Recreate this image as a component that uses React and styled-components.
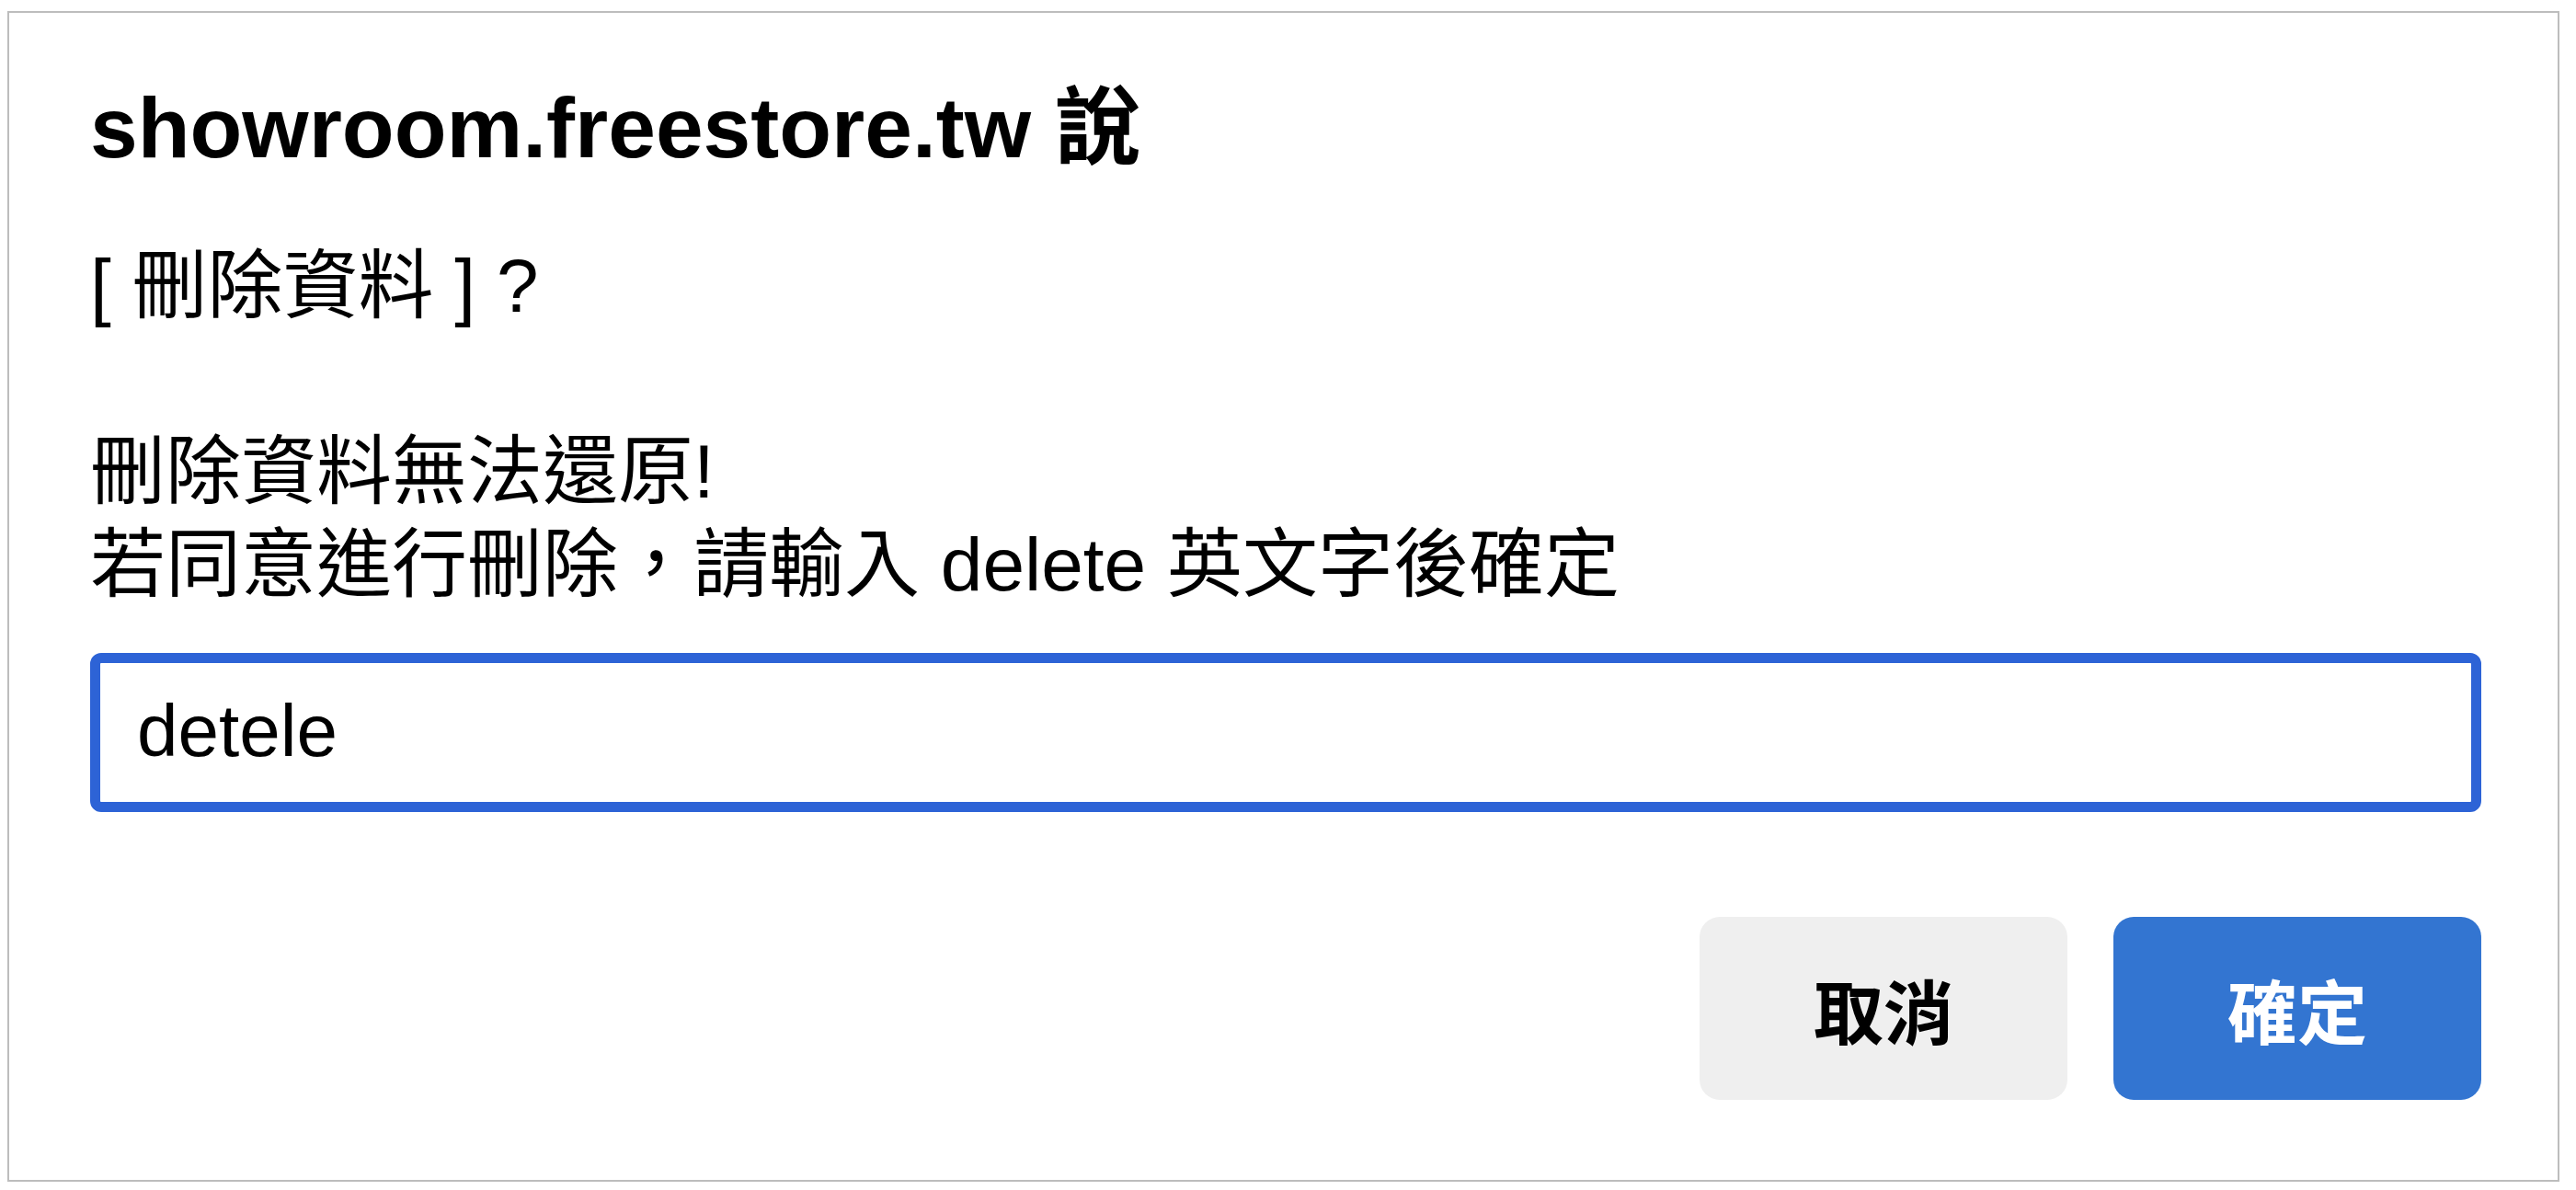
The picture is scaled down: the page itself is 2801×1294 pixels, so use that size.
import React from "react";
import styled, { createGlobalStyle } from "styled-components";

const Global = createGlobalStyle`
  html, body {
    margin: 0;
    padding: 0;
    background: #ffffff;
  }
  body {
    font-family: "Liberation Sans", "Noto Sans CJK TC", sans-serif;
    color: #000000;
  }
`;

const Frame = styled.div`
  box-sizing: border-box;
  width: 2775px;
  height: 1273px;
  margin: 12px 0 0 8px;
  border: 2px solid #bdbdbd;
  background: #ffffff;
  padding: 71px 83px 0 88px;
  display: flex;
  flex-direction: column;
`;

const Title = styled.h1`
  margin: 0;
  font-size: 93px;
  line-height: 108px;
  font-weight: 700;
  color: #000;
`;

const Message = styled.p`
  margin: 67px 0 0 0;
  font-size: 82px;
  line-height: 101px;
  font-weight: 400;
  white-space: pre-line;
  color: #000;
`;

const Field = styled.input`
  box-sizing: border-box;
  margin-top: 46px;
  width: 100%;
  height: 173px;
  border: 11px solid #2d63d6;
  border-radius: 12px;
  padding: 0 0 4px 40px;
  font-family: "Liberation Sans", "Noto Sans CJK TC", sans-serif;
  font-size: 80px;
  color: #000;
  background: #ffffff;
  outline: none;
`;

const Actions = styled.div`
  margin-top: 114px;
  display: flex;
  justify-content: flex-end;
  gap: 50px;
`;

const Button = styled.button`
  box-sizing: border-box;
  width: 400px;
  height: 199px;
  border: none;
  border-radius: 22px;
  font-family: "Liberation Sans", "Noto Sans CJK TC", sans-serif;
  font-size: 76px;
  font-weight: 700;
  cursor: pointer;
  background: ${(p) => (p.$primary ? "#3375d1" : "#efefef")};
  color: ${(p) => (p.$primary ? "#ffffff" : "#000000")};
`;

export default function App() {
  return (
    <>
      <Global />
      <Frame>
        <Title>showroom.freestore.tw 說</Title>
        <Message>
          {"[ 刪除資料 ] ?\n\n刪除資料無法還原!\n若同意進行刪除，請輸入 delete 英文字後確定"}
        </Message>
        <Field defaultValue="detele" />
        <Actions>
          <Button>取消</Button>
          <Button $primary>確定</Button>
        </Actions>
      </Frame>
    </>
  );
}
